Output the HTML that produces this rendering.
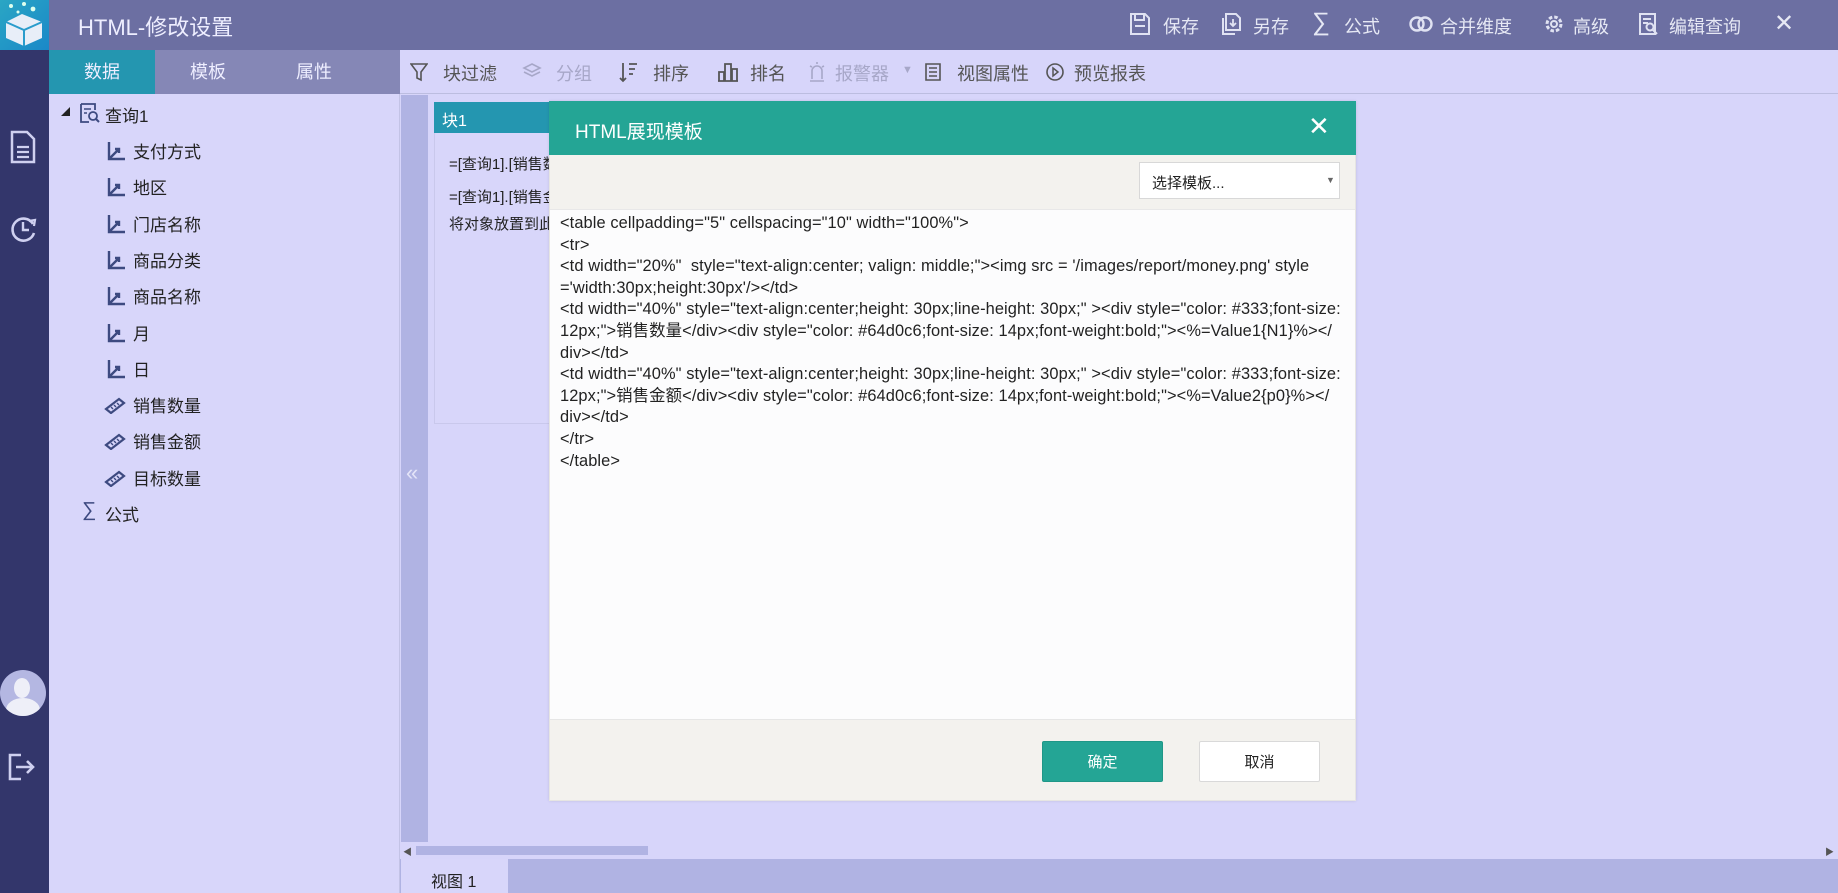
<!DOCTYPE html>
<html><head><meta charset="utf-8">
<style>
*{margin:0;padding:0;box-sizing:border-box}
body{width:1838px;height:893px;overflow:hidden;position:relative;background:#d7d5fa;font-family:"Liberation Sans","Noto Sans CJK SC",sans-serif;}
.a{position:absolute}
.side{left:0;top:0;width:49px;height:893px;background:#33366b}
.logo{left:0;top:0;width:49px;height:50px;background:linear-gradient(135deg,#2aa6c4,#1a88c8)}
.hdr{left:49px;top:0;width:1789px;height:50px;background:#6c6fa2}
.title{left:78px;top:10px;color:#eef;font-size:22px}
.hi{top:13px;color:#e6e8f4;font-size:18px;white-space:nowrap}
.tabs{left:49px;top:50px;width:351px;height:44px;background:#8587b6}
.tab{top:50px;height:44px;line-height:44px;text-align:center;color:#eef;font-size:18px}
.tree{left:49px;top:94px;width:351px;height:799px;background:#d8d6fa;border-right:1px solid #c3c3e6}
.ti{font-size:17px;color:#222;white-space:nowrap}
.tb{left:400px;top:50px;width:1438px;height:44px;background:#d7d5fa;border-bottom:1px solid #bcbde0}
.tbi{top:60px;font-size:18px;color:#555;white-space:nowrap}
.dis{color:#a7a7c8}
.strip{left:401px;top:95px;width:27px;height:764px;background:#b0b3e3}
.blk{left:434px;top:102px;width:120px;height:322px;background:#d8d6fa;border:1px solid #c9c8ec}
.bh{left:434px;top:102px;width:120px;height:31px;background:#2496b0;color:#fff;font-size:16px;padding:5px 8px}
.bt{font-size:15px;color:#222;white-space:nowrap}
.modal{left:549px;top:101px;width:807px;height:700px;background:#f3f2ee;border:1px solid #e6e5e2;box-shadow:0 0 3px rgba(0,0,0,.1)}
.mh{left:549px;top:101px;width:807px;height:54px;background:#24a595}
.mt{left:575px;top:117px;color:#fff;font-size:19px}
.sel{left:1139px;top:162px;width:201px;height:37px;background:#fff;border:1px solid #d8d8d8;font-size:15px;padding:9px 12px;color:#222}
.code{left:550px;top:209px;width:805px;height:511px;background:#fcfcfd;border-top:1px solid #e8e8e8;border-bottom:1px solid #e6e6e6;padding:3px 10px;font-size:16.4px;letter-spacing:0.1px;line-height:21.6px;color:#222;white-space:pre;overflow:visible}
.btn{top:741px;width:121px;height:41px;line-height:41px;text-align:center;font-size:15px;border-radius:2px}
.bot{left:400px;top:859px;width:1438px;height:34px;background:#b0b3e3}
</style></head><body>
<div class="a side"></div>
<div class="a logo"><svg width="49" height="50" viewBox="0 0 49 50"><circle cx="11" cy="6" r="2" fill="#dfe"/><circle cx="24" cy="4" r="2" fill="#dfe"/><circle cx="33" cy="9" r="2.4" fill="#dfe"/><circle cx="18" cy="12" r="1.5" fill="#dfe"/><path d="M6 22 L22 14 L42 22 L42 38 L24 46 L6 38 Z" fill="#e8eef8"/><path d="M6 22 L24 30 L42 22 M24 30 L24 46" stroke="#2a9ccc" stroke-width="2" fill="none"/></svg></div>
<svg class="a" style="left:9px;top:130px" width="28" height="34" viewBox="0 0 28 34"><path d="M3 2 H18 L25 9 V32 H3 Z" fill="none" stroke="#cfd0f0" stroke-width="2.5"/><path d="M8 17 H20 M8 22 H20 M8 27 H20" stroke="#cfd0f0" stroke-width="2.2"/></svg>
<svg class="a" style="left:8px;top:213px" width="30" height="32" viewBox="0 0 30 32"><path d="M25 11 A11 11 0 1 0 26 20" fill="none" stroke="#cfd0f0" stroke-width="2.6"/><path d="M15 9 V17 H21" fill="none" stroke="#cfd0f0" stroke-width="2.4"/><path d="M21 8 L27 7 L26 13" fill="none" stroke="#cfd0f0" stroke-width="2.2"/></svg>
<div class="a" style="left:0;top:670px;width:46px;height:46px;border-radius:50%;background:#b4b7e2;overflow:hidden"><div class="a" style="left:14px;top:8px;width:16px;height:20px;border-radius:50%;background:#eeeff8"></div><div class="a" style="left:6px;top:28px;width:34px;height:24px;border-radius:50%;background:#eeeff8"></div></div>
<svg class="a" style="left:7px;top:752px" width="30" height="30" viewBox="0 0 30 30"><path d="M14 3 H3 V27 H14" fill="none" stroke="#cfd0f0" stroke-width="2.6"/><path d="M9 15 H25 M20 9 L26 15 L20 21" fill="none" stroke="#cfd0f0" stroke-width="2.6"/></svg>
<div class="a hdr"></div>
<div class="a title">HTML-修改设置</div>
<svg class="a" style="left:1129px;top:12px" width="22" height="24" viewBox="0 0 22 24"><path d="M2 2 H16 L20 6 V22 H2 Z M6 2 V8 H15 V2 M6 14 H16" fill="none" stroke="#e0e2f2" stroke-width="2"/></svg>
<div class="a hi" style="left:1163px">保存</div>
<svg class="a" style="left:1221px;top:12px" width="20" height="24" viewBox="0 0 20 24"><path d="M5 2 H15 L19 6 V18 H5 Z M2 6 V22 H14" fill="none" stroke="#e0e2f2" stroke-width="2"/><path d="M12 7 V14 M9 11 L12 14 L15 11" fill="none" stroke="#e0e2f2" stroke-width="1.8"/></svg>
<div class="a hi" style="left:1253px">另存</div>
<div class="a hi" style="left:1312px;top:8px;font-size:25px">∑</div>
<div class="a hi" style="left:1344px">公式</div>
<svg class="a" style="left:1409px;top:15px" width="24" height="18" viewBox="0 0 24 18"><circle cx="8" cy="9" r="6.5" fill="none" stroke="#e0e2f2" stroke-width="2.4"/><circle cx="16" cy="9" r="6.5" fill="none" stroke="#e0e2f2" stroke-width="2.4"/></svg>
<div class="a hi" style="left:1440px">合并维度</div>
<svg class="a" style="left:1543px;top:13px" width="22" height="22" viewBox="0 0 22 22"><circle cx="11" cy="11" r="7" fill="none" stroke="#e0e2f2" stroke-width="3" stroke-dasharray="3.5 2"/><circle cx="11" cy="11" r="3" fill="none" stroke="#e0e2f2" stroke-width="2"/></svg>
<div class="a hi" style="left:1573px">高级</div>
<svg class="a" style="left:1638px;top:12px" width="22" height="26" viewBox="0 0 22 26"><path d="M2 2 H17 V22 H2 Z M5 7 H13 M5 11 H10" fill="none" stroke="#e0e2f2" stroke-width="2"/><circle cx="12" cy="15" r="3.5" fill="none" stroke="#e0e2f2" stroke-width="2"/><path d="M14.5 17.5 L19 22" stroke="#e0e2f2" stroke-width="2"/></svg>
<div class="a hi" style="left:1669px">编辑查询</div>
<div class="a hi" style="left:1774px;top:9px;font-size:24px">✕</div>
<div class="a tabs"></div>
<div class="a tab" style="left:49px;width:106px;background:#2496b0">数据</div>
<div class="a tab" style="left:155px;width:106px">模板</div>
<div class="a tab" style="left:261px;width:106px">属性</div>
<div class="a tree"></div>
<svg class="a" style="left:61px;top:107px" width="9" height="9" viewBox="0 0 9 9"><path d="M9 0 V9 H0 Z" fill="#222"/></svg>
<svg class="a" style="left:79px;top:102px" width="22" height="22" viewBox="0 0 22 22"><path d="M2 2 H16 V8 M2 2 V20 H10" fill="none" stroke="#3d4a80" stroke-width="1.8"/><path d="M5 7 H12 M5 11 H8" stroke="#3d4a80" stroke-width="1.6"/><circle cx="14" cy="14" r="4" fill="none" stroke="#3d4a80" stroke-width="1.8"/><path d="M17 17 L20 20" stroke="#3d4a80" stroke-width="2"/></svg>
<div class="a ti" style="left:105px;top:102px">查询1</div>
<div id="tree"></div>
<div class="a tb"></div>
<svg class="a" style="left:410px;top:62px" width="18" height="20" viewBox="0 0 18 20"><path d="M1 2 H17 L11 10 V18 L7 16 V10 Z" fill="none" stroke="#555" stroke-width="1.6"/></svg>
<div class="a tbi" style="left:443px">块过滤</div>
<svg class="a" style="left:522px;top:62px" width="20" height="18" viewBox="0 0 20 18"><path d="M10 2 L18 6 L10 10 L2 6 Z M2 10 L10 14 L18 10" fill="none" stroke="#a7a7c8" stroke-width="1.6"/></svg>
<div class="a tbi dis" style="left:556px">分组</div>
<svg class="a" style="left:619px;top:61px" width="20" height="22" viewBox="0 0 20 22"><path d="M4 2 V20 M1 17 L4 20 L7 17 M10 3 H18 M10 8 H16 M10 13 H14" fill="none" stroke="#555" stroke-width="1.8"/></svg>
<div class="a tbi" style="left:653px">排序</div>
<svg class="a" style="left:716px;top:61px" width="24" height="22" viewBox="0 0 24 22"><path d="M2 20 H22 M3 20 V11 H8 V20 M9 20 V3 H15 V20 M16 20 V8 H21 V20" fill="none" stroke="#555" stroke-width="1.8"/></svg>
<div class="a tbi" style="left:750px">排名</div>
<svg class="a" style="left:808px;top:61px" width="18" height="22" viewBox="0 0 18 22"><path d="M4 18 V10 A5 5 0 0 1 14 10 V18 M2 20 H16 M9 1 V3 M2 5 L4 6 M16 5 L14 6" fill="none" stroke="#a7a7c8" stroke-width="1.6"/></svg>
<div class="a tbi dis" style="left:835px">报警器</div>
<div class="a tbi dis" style="left:902px;top:64px;font-size:11px">▼</div>
<svg class="a" style="left:924px;top:62px" width="18" height="20" viewBox="0 0 18 20"><path d="M2 2 H16 V18 H2 Z M5 6 H13 M5 10 H13 M5 14 H13" fill="none" stroke="#555" stroke-width="1.6"/></svg>
<div class="a tbi" style="left:957px">视图属性</div>
<svg class="a" style="left:1045px;top:62px" width="20" height="20" viewBox="0 0 20 20"><circle cx="10" cy="10" r="8" fill="none" stroke="#555" stroke-width="1.6"/><path d="M8 6 L13 10 L8 14 Z" fill="none" stroke="#555" stroke-width="1.5"/></svg>
<div class="a tbi" style="left:1074px">预览报表</div>
<div class="a strip"></div>
<div class="a" style="left:406px;top:460px;color:#e4e4f8;font-size:22px">«</div>
<div class="a blk"></div>
<div class="a bh">块1</div>
<div class="a bt" style="left:449px;top:153px">=[查询1].[销售数量]</div>
<div class="a bt" style="left:449px;top:186px">=[查询1].[销售金额]</div>
<div class="a bt" style="left:449px;top:213px">将对象放置到此处</div>
<div class="a modal"></div>
<div class="a mh"></div>
<div class="a mt">HTML展现模板</div>
<div class="a" style="left:1308px;top:111px;color:#fff;font-size:26px;font-weight:300">✕</div>
<div class="a sel">选择模板...</div>
<div class="a" style="left:1326px;top:175px;font-size:9px;color:#666">▼</div>
<div class="a code">&lt;table cellpadding="5" cellspacing="10" width="100%"&gt;
&lt;tr&gt;
&lt;td width="20%"  style="text-align:center; valign: middle;"&gt;&lt;img src = '/images/report/money.png' style
='width:30px;height:30px'/&gt;&lt;/td&gt;
&lt;td width="40%" style="text-align:center;height: 30px;line-height: 30px;" &gt;&lt;div style="color: #333;font-size:
12px;"&gt;销售数量&lt;/div&gt;&lt;div style="color: #64d0c6;font-size: 14px;font-weight:bold;"&gt;&lt;%=Value1{N1}%&gt;&lt;/
div&gt;&lt;/td&gt;
&lt;td width="40%" style="text-align:center;height: 30px;line-height: 30px;" &gt;&lt;div style="color: #333;font-size:
12px;"&gt;销售金额&lt;/div&gt;&lt;div style="color: #64d0c6;font-size: 14px;font-weight:bold;"&gt;&lt;%=Value2{p0}%&gt;&lt;/
div&gt;&lt;/td&gt;
&lt;/tr&gt;
&lt;/table&gt;</div>
<div class="a btn" style="left:1042px;background:#24a595;color:#fff;border:1px solid #1f9787">确定</div>
<div class="a btn" style="left:1199px;background:#fff;color:#222;border:1px solid #d9d9d9">取消</div>
<div class="a" style="left:400px;top:842px;width:1438px;height:17px;background:#d7d5fa"></div>
<div class="a" style="left:416px;top:846px;width:232px;height:9px;background:#b0b3e3"></div>
<div class="a" style="left:403px;top:845px;font-size:9px;color:#555">◀</div>
<div class="a" style="left:1825px;top:845px;font-size:9px;color:#555">▶</div>
<div class="a bot"></div>
<div class="a" style="left:401px;top:859px;width:107px;height:34px;background:#d8d6fa;font-size:16px;color:#222;padding:9px 0 0 30px">视图 1</div>
<script>
var items=[["支付方式",0],["地区",0],["门店名称",0],["商品分类",0],["商品名称",0],["月",0],["日",0],["销售数量",1],["销售金额",1],["目标数量",1]];
var h="";for(var i=0;i<items.length;i++){var y=138+i*36.3;
if(items[i][1]==0)h+='<svg class="a" style="left:106px;top:'+(y+3)+'px" width="20" height="20" viewBox="0 0 20 20"><path d="M3 1 V18 H19 M3 18 L13 8 M9 8 H13 V12" fill="none" stroke="#3d4a80" stroke-width="2.4"/></svg>';
else h+='<svg class="a" style="left:104px;top:'+(y+4)+'px" width="22" height="18" viewBox="0 0 22 18"><path d="M2 13 L15 3 L20 7 L7 17 Z" fill="none" stroke="#3d4a80" stroke-width="2.2"/><path d="M7 11 L9 13 M10 9 L12 11 M13 7 L15 9" stroke="#3d4a80" stroke-width="1.4"/></svg>';
h+='<div class="a ti" style="left:133px;top:'+y+'px">'+items[i][0]+'</div>';}
h+='<div class="a ti" style="left:82px;top:'+(138+10*36.3-2)+'px;font-size:20px;color:#3d4a80">∑</div><div class="a ti" style="left:105px;top:'+(138+10*36.3)+'px">公式</div>';
document.getElementById("tree").innerHTML=h;
</script>
</body></html>
